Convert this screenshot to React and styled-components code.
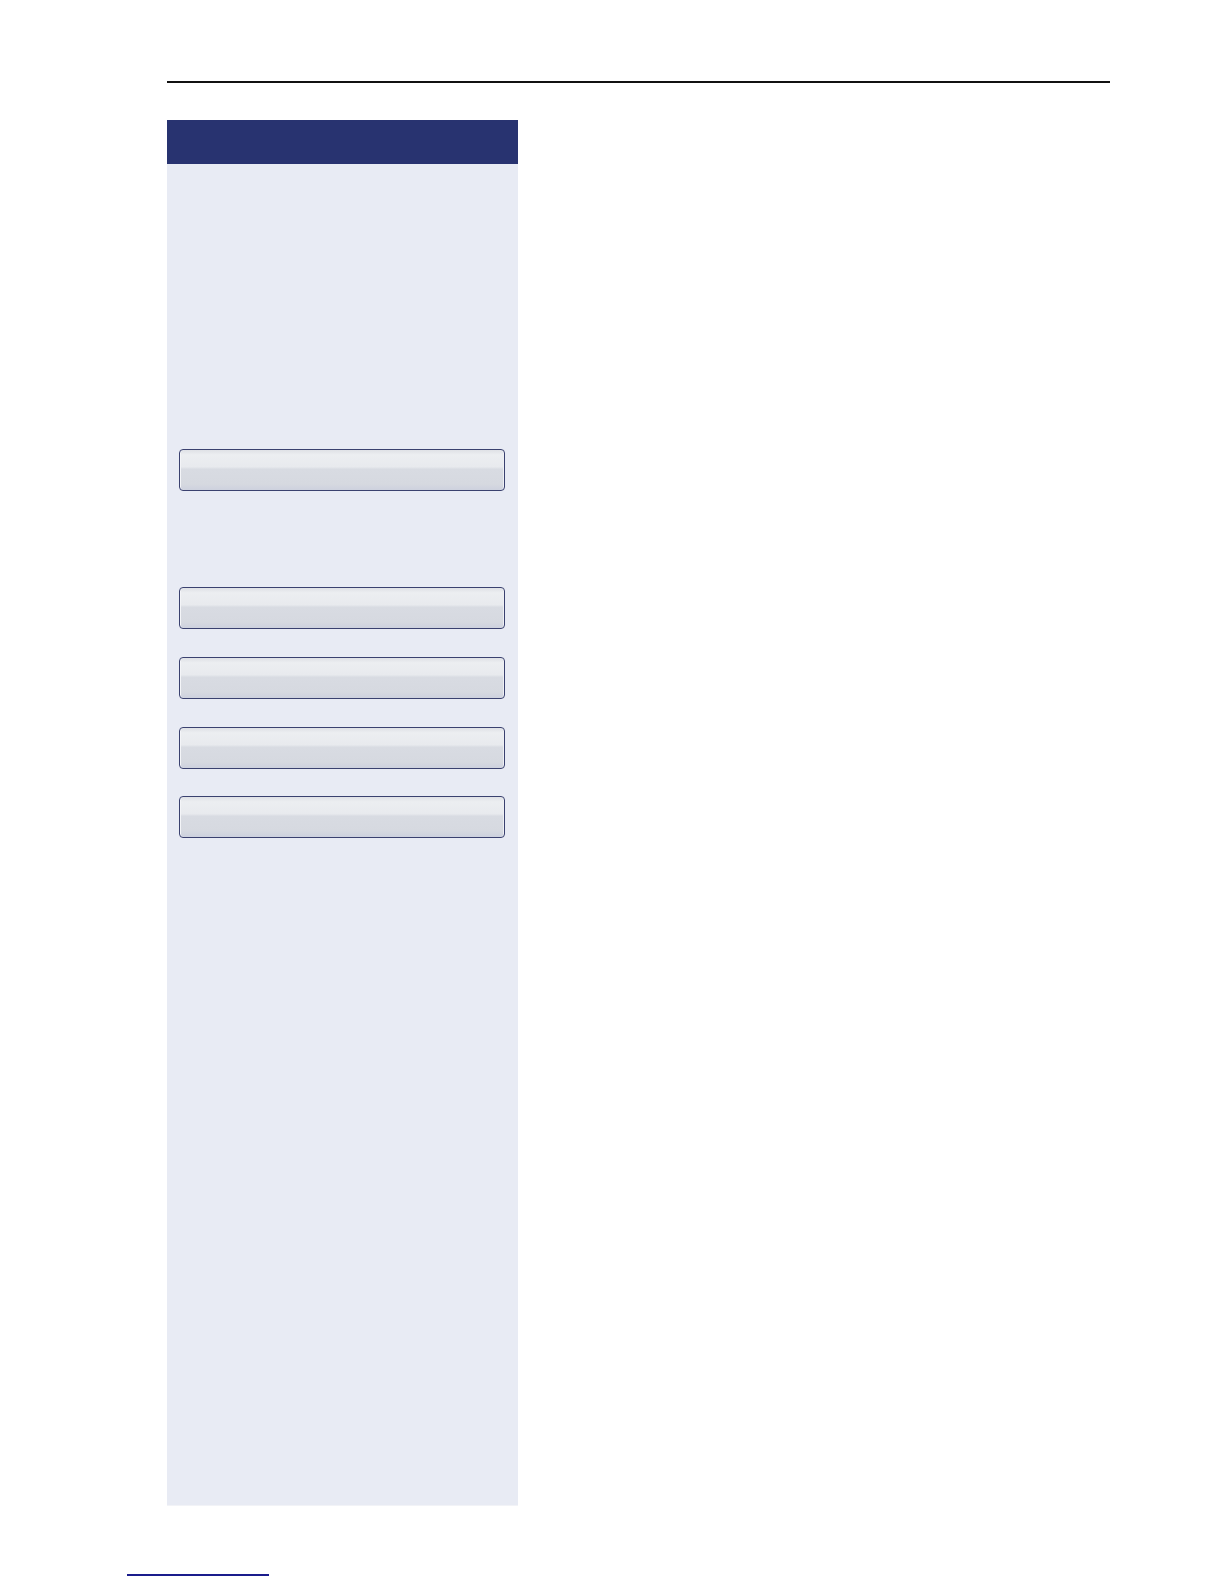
import styled, { createGlobalStyle } from "styled-components";

const GlobalStyle = createGlobalStyle`
  html, body {
    margin: 0;
    padding: 0;
    background: #ffffff;
    font-family: "Liberation Sans", Arial, sans-serif;
  }
`;

const Page = styled.div`
  width: 1224px;
  height: 1584px;
  position: relative;
  box-sizing: border-box;
  padding-top: 81px;
  padding-left: 167px;
`;

const TopRule = styled.div`
  width: 943px;
  height: 2px;
  background: #111111;
`;

const Sidebar = styled.aside`
  margin-top: 37px;
  width: 351px;
  height: 1385px;
  background: #e8ebf4;
  display: flex;
  flex-direction: column;
  box-shadow: 0 1px 0 #f2f3f7;
`;

const Header = styled.div`
  height: 44px;
  background: #283370;
`;

const Body = styled.div`
  display: flex;
  flex-direction: column;
  padding: 0 13px 0 12px;
`;

const Key = styled.div`
  box-sizing: border-box;
  height: 42px;
  margin-top: ${(p) => p.$top}px;
  border: 1.5px solid #3a416f;
  border-radius: 4px;
  background: linear-gradient(
    to bottom,
    #dfe1e6 0%,
    #eceef1 12%,
    #e8eaee 42%,
    #d8dbe2 48%,
    #d6d9e0 85%,
    #cdd1de 100%
  );
  box-shadow: inset 1px 0 0 #f4f5f8, inset -1px 0 0 #eef0f4;
`;

const FooterLink = styled.div`
  position: absolute;
  left: 127px;
  top: 1574px;
  width: 142px;
  height: 2px;
  background: #1a1c8c;
`;

const keys = [285, 96, 28, 28, 27];

export default function App() {
  return (
    <Page>
      <GlobalStyle />
      <TopRule />
      <Sidebar>
        <Header />
        <Body>
          {keys.map((t, i) => (
            <Key key={i} $top={t} />
          ))}
        </Body>
      </Sidebar>
      <FooterLink />
    </Page>
  );
}
